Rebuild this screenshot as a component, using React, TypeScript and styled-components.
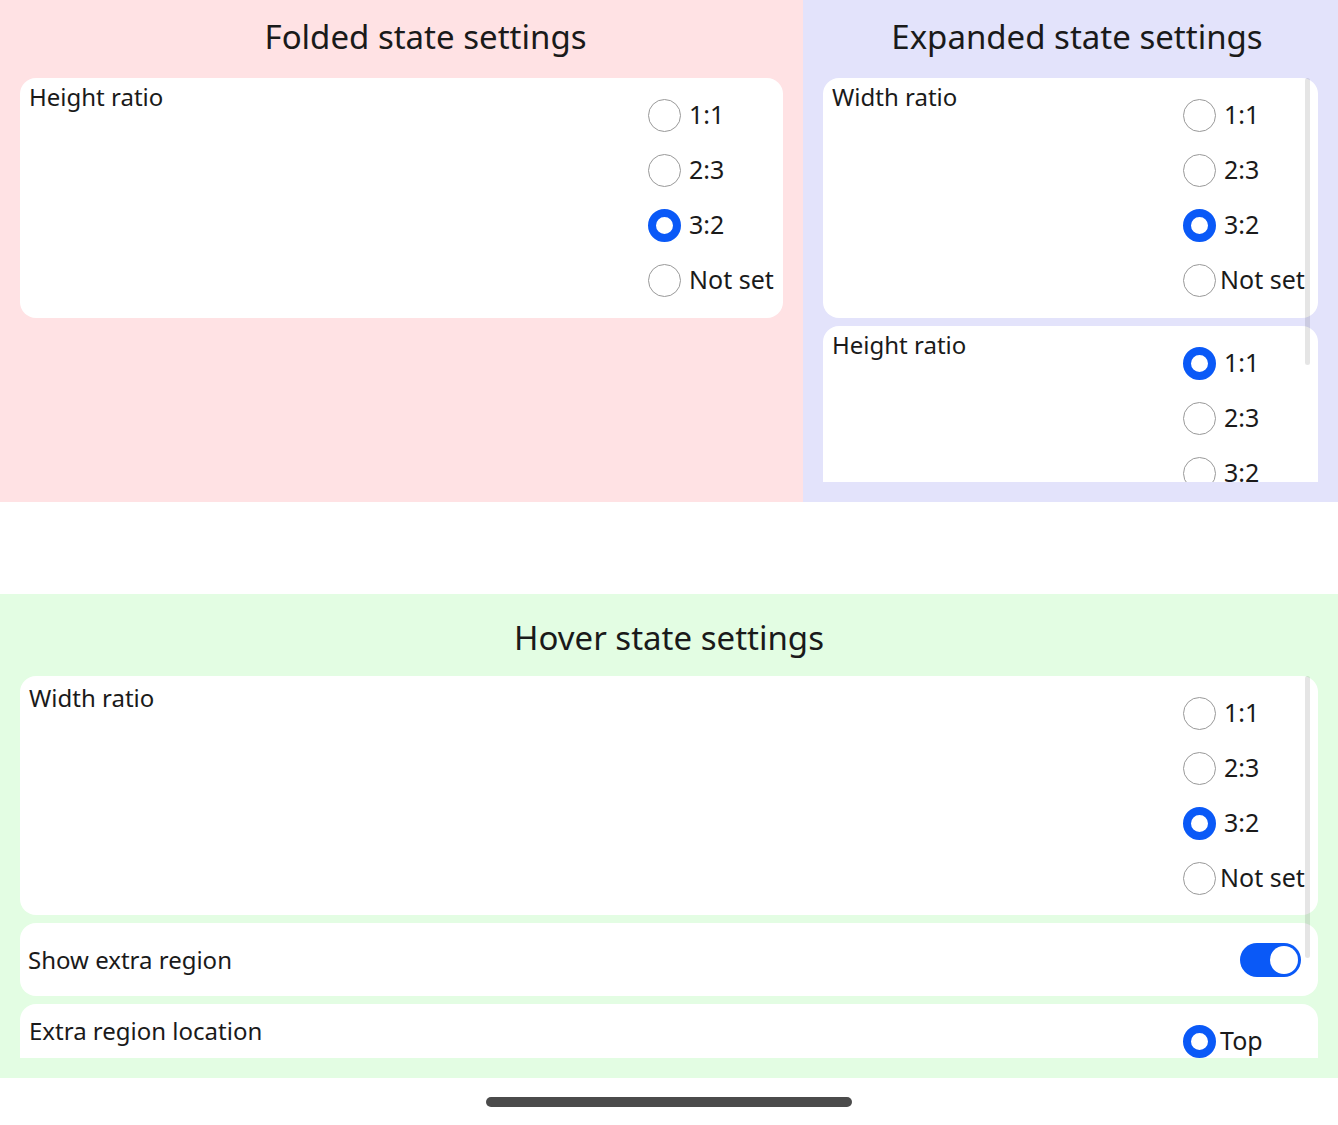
import styled, { createGlobalStyle } from "styled-components";

const GlobalStyle = createGlobalStyle`
  body {
    margin: 0;
    background: #ffffff;
    font-family: "Noto Sans", "Liberation Sans", sans-serif;
    color: #1a1a1a;
  }
`;

const Page = styled.div`
  width: 1338px;
  height: 1125px;
  display: flex;
  flex-direction: column;
  overflow: hidden;
`;

const TopRow = styled.div`
  display: grid;
  grid-template-columns: 803px 1fr;
  height: 502px;
`;

const Gap = styled.div`
  height: 92px;
`;

const Panel = styled.section<{ $tint: string; $height?: number }>`
  background: ${(p) => p.$tint};
  height: ${(p) => (p.$height ? `${p.$height}px` : "auto")};
  display: flex;
  flex-direction: column;
  padding: 0 20px 20px;
  box-sizing: border-box;
`;

const PanelTitle = styled.h2<{ $top: number; $bottom: number; $shift?: number }>`
  margin: 0;
  padding: ${(p) => p.$top}px 0 0 ${(p) => p.$shift || 0}px;
  margin-bottom: ${(p) => p.$bottom}px;
  font-size: 33px;
  line-height: 44px;
  font-weight: 400;
  text-align: center;
  color: #1a1a1a;
`;

const ScrollArea = styled.div<{ $height?: number }>`
  position: relative;
  height: ${(p) => (p.$height ? `${p.$height}px` : "auto")};
  overflow: hidden;
  display: flex;
  flex-direction: column;
  gap: 8px;
`;

const ScrollThumb = styled.div<{ $height: number }>`
  position: absolute;
  top: 0;
  right: 8px;
  width: 5px;
  height: ${(p) => p.$height}px;
  border-radius: 3px;
  background: rgba(0, 0, 0, 0.1);
`;

const Card = styled.div<{ $height?: number }>`
  flex-shrink: 0;
  background: #ffffff;
  border-radius: 16px;
  display: flex;
  justify-content: space-between;
  align-items: flex-start;
  height: ${(p) => (p.$height ? `${p.$height}px` : "auto")};
`;

const InlineCard = styled(Card)`
  align-items: center;
  padding-right: 17px;
`;

const Label = styled.div<{ $top?: number }>`
  font-size: 24px;
  line-height: 32px;
  padding: ${(p) => p.$top ?? 3}px 0 0 9px;
`;

const RowLabel = styled.div`
  font-size: 24px;
  line-height: 32px;
  padding-left: 8px;
`;

const RadioList = styled.div`
  width: 125px;
  margin-right: 10px;
  padding: 10px 0;
  display: flex;
  flex-direction: column;
`;

const Option = styled.div<{ $tight?: boolean }>`
  height: 55px;
  display: flex;
  align-items: center;
  gap: ${(p) => (p.$tight ? 4 : 8)}px;
  font-size: 25px;
  line-height: 32px;
  white-space: nowrap;
`;

const OptionText = styled.span`
  padding-bottom: 4px;
`;

const Dot = styled.span<{ $on?: boolean }>`
  flex-shrink: 0;
  width: 33px;
  height: 33px;
  box-sizing: border-box;
  border-radius: 50%;
  background: #ffffff;
  border: ${(p) => (p.$on ? "8px solid #0a59f7" : "1.5px solid #999999")};
`;

const Toggle = styled.div`
  width: 61px;
  height: 34px;
  border-radius: 17px;
  background: #0a59f7;
  display: flex;
  align-items: center;
  justify-content: flex-end;
  padding: 0 3px;
  box-sizing: border-box;
`;

const Knob = styled.span`
  width: 28px;
  height: 28px;
  border-radius: 50%;
  background: #ffffff;
`;

const HomeArea = styled.div`
  flex: 1;
  display: flex;
  align-items: center;
  justify-content: center;
`;

const HomeBar = styled.div`
  width: 366px;
  height: 10px;
  border-radius: 5px;
  background: #4b4b4b;
`;

const ratios = ["1:1", "2:3", "3:2", "Not set"];

const RatioCard = ({
  label,
  selected,
  tightLast,
  height,
  labelTop,
  shown = ratios.length,
}: {
  label: string;
  selected: string;
  tightLast?: boolean;
  height?: number;
  labelTop?: number;
  shown?: number;
}) => (
  <Card $height={height}>
    <Label $top={labelTop}>{label}</Label>
    <RadioList>
      {ratios.slice(0, shown).map((r) => (
        <Option key={r} $tight={tightLast && r === "Not set"}>
          <Dot $on={r === selected} />
          <OptionText>{r}</OptionText>
        </Option>
      ))}
    </RadioList>
  </Card>
);

const App = () => (
  <Page>
    <GlobalStyle />
    <TopRow>
      <Panel $tint="#ffe2e4">
        <PanelTitle $top={15} $bottom={19} $shift={48}>
          Folded state settings
        </PanelTitle>
        <RatioCard label="Height ratio" selected="3:2" />
      </Panel>
      <Panel $tint="#e3e3fb">
        <PanelTitle $top={15} $bottom={19} $shift={13}>
          Expanded state settings
        </PanelTitle>
        <ScrollArea $height={404}>
          <RatioCard label="Width ratio" selected="3:2" tightLast />
          <RatioCard label="Height ratio" selected="1:1" tightLast shown={3} />
          <ScrollThumb $height={287} />
        </ScrollArea>
      </Panel>
    </TopRow>
    <Gap />
    <Panel $tint="#e3fde3" $height={484}>
      <PanelTitle $top={22} $bottom={16}>
        Hover state settings
      </PanelTitle>
      <ScrollArea $height={382}>
        <RatioCard
          label="Width ratio"
          selected="3:2"
          tightLast
          height={239}
          labelTop={6}
        />
        <InlineCard $height={73}>
          <RowLabel>Show extra region</RowLabel>
          <Toggle>
            <Knob />
          </Toggle>
        </InlineCard>
        <Card>
          <Label $top={11}>Extra region location</Label>
          <RadioList>
            <Option $tight>
              <Dot $on />
              <OptionText>Top</OptionText>
            </Option>
          </RadioList>
        </Card>
        <ScrollThumb $height={282} />
      </ScrollArea>
    </Panel>
    <HomeArea>
      <HomeBar />
    </HomeArea>
  </Page>
);

export default App;
